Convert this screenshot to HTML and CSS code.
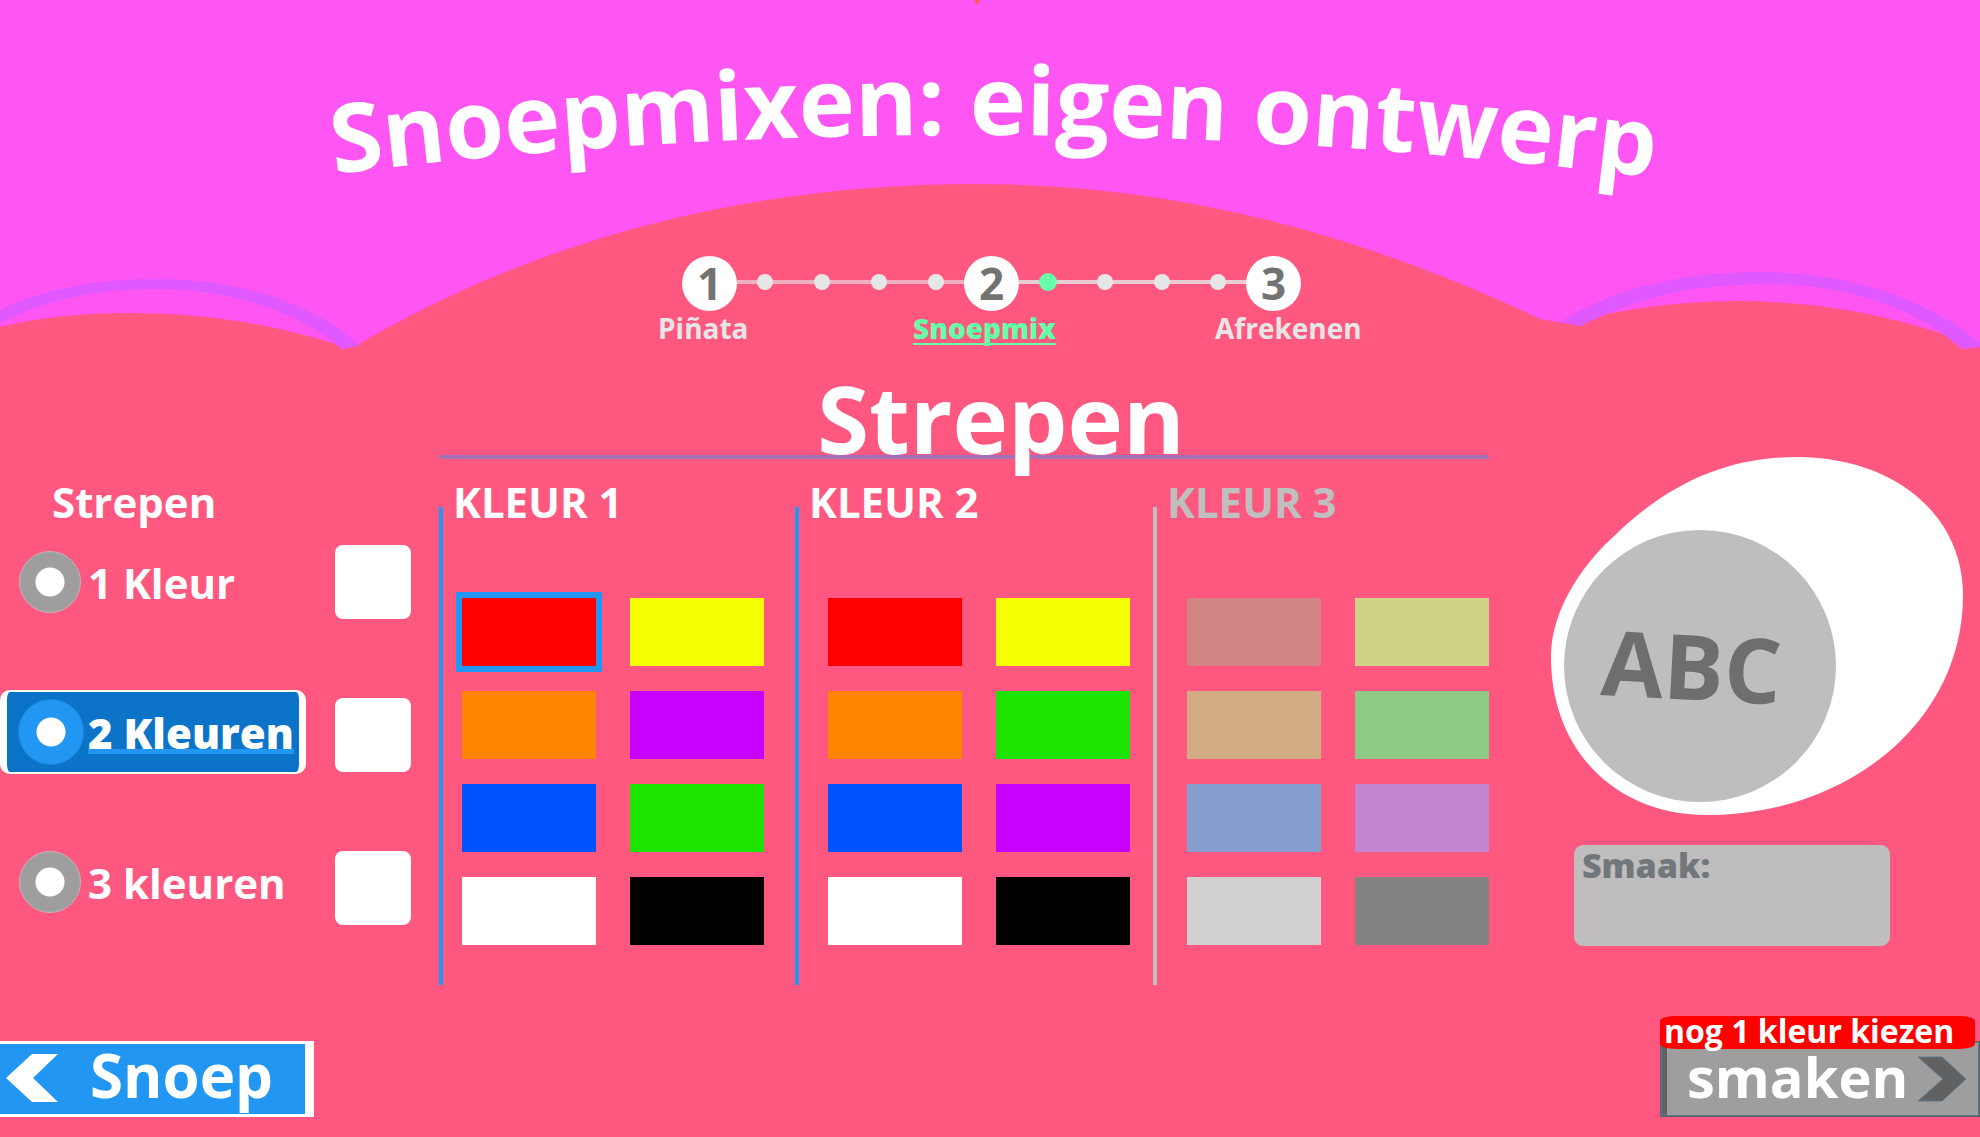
FILE: index.html
```html
<!DOCTYPE html>
<html lang="nl">
<head>
<meta charset="utf-8">
<meta name="viewport" content="width=device-width, initial-scale=1">
<title>Snoepmixen: eigen ontwerp</title>
<link rel="stylesheet" href="styles.css">
</head>
<body>
<svg class="waves" viewBox="0 0 1980 360" preserveAspectRatio="none" aria-hidden="true">
  <path class="waves-sky" d="M0 0H1980V347L1962 349L1943 334C1880 313 1810 301 1737 301C1690 301 1650 306 1606 314L1580 326Q1557 322 1540 319L1536 317C1340 225 1160 184 975 184C750 184 540 238 359 344L343 349L335 344C265 322 200 313 130 313C85 313 40 317 0 327Z"/>
  <path class="waves-arc" d="M0 310C45 288 100 279 155 279C235 279 310 300 360 346L342 349C290 305 220 289 155 289C95 289 45 300 0 323Z"/>
  <path class="waves-arc" d="M1560 322C1620 285 1690 272 1760 272C1850 272 1930 300 1980 343V347L1962 349C1910 303 1840 284 1765 284C1690 284 1640 300 1606 314L1580 326Z"/>
  <path class="waves-notch" d="M974 0H980L978 4H976Z"/>
</svg>

<header>
  <h1 class="title">
    <svg viewBox="0 0 1980 256">
      <path id="title-arc" fill="none" d="M334 174Q990 92 1690 182"/>
      <text class="title-text"><textPath href="#title-arc">Snoepmixen: eigen ontwerp</textPath></text>
    </svg>
  </h1>
  <nav class="stepper" aria-label="Stappen">
    <div class="track">
      <span class="step">1</span>
      <span class="dots"><i class="dot"></i><i class="dot"></i><i class="dot"></i><i class="dot"></i></span>
      <span class="step">2</span>
      <span class="dots dots-current"><i class="dot dot-current"></i><i class="dot"></i><i class="dot"></i><i class="dot"></i></span>
      <span class="step">3</span>
    </div>
    <div class="step-labels">
      <a href="#">Piñata</a>
      <a href="#" class="current" aria-current="step">Snoepmix</a>
      <a href="#">Afrekenen</a>
    </div>
  </nav>
</header>

<main class="designer">
  <h2 class="pattern-title">Strepen</h2>

  <form class="stripes">
    <h3 class="panel-title stripes-title">Strepen</h3>
    <div class="options">
      <label class="option"><input type="radio" name="count"><span>1 Kleur</span></label>
      <label class="option option-selected"><input type="radio" name="count" checked><span>2 Kleuren</span></label>
      <label class="option"><input type="radio" name="count"><span>3 kleuren</span></label>
    </div>
    <div class="samples">
      <span class="sample"></span>
      <span class="sample"></span>
      <span class="sample"></span>
    </div>
  </form>

  <div class="palettes">
    <section class="palette">
      <h3 class="panel-title">KLEUR 1</h3>
      <div class="swatches">
        <button type="button" class="swatch red selected" aria-label="Rood"></button>
        <button type="button" class="swatch yellow" aria-label="Geel"></button>
        <button type="button" class="swatch orange" aria-label="Oranje"></button>
        <button type="button" class="swatch purple" aria-label="Paars"></button>
        <button type="button" class="swatch blue" aria-label="Blauw"></button>
        <button type="button" class="swatch green" aria-label="Groen"></button>
        <button type="button" class="swatch white" aria-label="Wit"></button>
        <button type="button" class="swatch black" aria-label="Zwart"></button>
      </div>
    </section>
    <section class="palette palette-second">
      <h3 class="panel-title">KLEUR 2</h3>
      <div class="swatches">
        <button type="button" class="swatch red" aria-label="Rood"></button>
        <button type="button" class="swatch yellow" aria-label="Geel"></button>
        <button type="button" class="swatch orange" aria-label="Oranje"></button>
        <button type="button" class="swatch green" aria-label="Groen"></button>
        <button type="button" class="swatch blue" aria-label="Blauw"></button>
        <button type="button" class="swatch purple" aria-label="Paars"></button>
        <button type="button" class="swatch white" aria-label="Wit"></button>
        <button type="button" class="swatch black" aria-label="Zwart"></button>
      </div>
    </section>
    <section class="palette palette-disabled">
      <h3 class="panel-title">KLEUR 3</h3>
      <div class="swatches">
        <button type="button" class="swatch red" disabled aria-label="Rood"></button>
        <button type="button" class="swatch yellow" disabled aria-label="Geel"></button>
        <button type="button" class="swatch orange" disabled aria-label="Oranje"></button>
        <button type="button" class="swatch green" disabled aria-label="Groen"></button>
        <button type="button" class="swatch blue" disabled aria-label="Blauw"></button>
        <button type="button" class="swatch purple" disabled aria-label="Paars"></button>
        <button type="button" class="swatch white" disabled aria-label="Wit"></button>
        <button type="button" class="swatch black" disabled aria-label="Zwart"></button>
      </div>
    </section>
  </div>

  <aside class="preview">
    <svg class="candy" viewBox="1551 457 412 358">
      <path fill="#fff" d="M1797 457C1893 457 1963 514 1963 595C1963 724 1845 815 1707 815C1615 815 1551 750 1551 657C1551 603 1592 556 1612 538C1670 481 1730 457 1797 457Z"/>
      <ellipse cx="1700" cy="666" rx="136" ry="136" fill="#bfbdbe"/>
      <text class="candy-text" x="1600" y="695" transform="rotate(3 1600 695)">ABC</text>
    </svg>
    <div class="flavour">Smaak:</div>
  </aside>
</main>

<footer class="actions">
  <button type="button" class="action back">
    <svg width="52" height="48" viewBox="0 0 52 48" aria-hidden="true"><path fill="#fff" d="M0 24L26 0H52L27 24L52 48H26Z"/></svg>
    <span class="action-label">Snoep</span>
  </button>
  <div class="next-wrap">
    <button type="button" class="action next" disabled>
      <span class="action-label">smaken</span>
      <svg width="50" height="46" viewBox="0 0 50 46" aria-hidden="true"><path fill="#616161" stroke="#5a7892" d="M1 1H25L49 23L25 45H1L26 23Z"/></svg>
    </button>
    <span class="notice" role="status">nog 1 kleur kiezen</span>
  </div>
</footer>
</body>
</html>
```
FILE: styles.css
```css
* { box-sizing: border-box; }

body {
  position: relative;
  margin: 0;
  min-height: 100vh;
  overflow-x: hidden;
  background: #ff5880;
  color: #fff;
  font-family: "Open Sans", "Noto Sans", sans-serif;
  font-weight: 700;
}

h1, h2, h3 { margin: 0; font-weight: 700; }
button { margin: 0; font: inherit; color: inherit; }

/* Wavy backdrop behind the header */
.waves {
  position: absolute;
  z-index: -1;
  top: 0;
  left: 0;
  width: 100%;
  height: 360px;
}
.waves-sky { fill: #ff55f2; }
.waves-arc { fill: #e058ff; }
.waves-notch { fill: #ff5a50; }

.title svg { display: block; width: 100%; }
.title-text { fill: #fff; font-size: 95px; }

/* Progress stepper */
.stepper { width: 664px; margin: 0 auto; }
.track { display: flex; margin-left: 24px; width: 619px; }
.step {
  width: 55px;
  height: 55px;
  border-radius: 50%;
  background: #fff;
  color: #737373;
  font-size: 44px;
  line-height: 55px;
  text-align: center;
}
.dots {
  flex: 1;
  display: flex;
  align-items: center;
  justify-content: space-around;
  padding-bottom: 4px;
  background: linear-gradient(#efb0c2, #efb0c2) center / 100% 4px no-repeat content-box;
}
.dots-current { background-image: linear-gradient(#ebcbd4, #ebcbd4); }
.dot { width: 16px; height: 16px; border-radius: 50%; background: #e6e6e6; }
.dot-current { width: 18px; height: 18px; background: #66ffa8; }

.step-labels {
  display: grid;
  grid-template-columns: 255px 302px auto;
  font-size: 28px;
  line-height: 34px;
  white-space: nowrap;
}
.step-labels a { color: #e6e6e6; text-decoration: none; }
.step-labels .current {
  color: #66ffa8;
  font-weight: 800;
  text-decoration: underline 2px;
  text-underline-offset: 4px;
  text-decoration-skip-ink: none;
}

/* Three-part work area */
.designer {
  display: grid;
  grid-template-columns: 439px 1fr 491px;
  grid-template-rows: 77px auto;
  margin-top: 37px;
}
.pattern-title {
  grid-area: 1 / 2;
  padding-left: 74px;
  border-bottom: 4px solid #a472b4;
  font-size: 94px;
  line-height: 73px;
  text-align: center;
}
.panel-title { font-size: 42px; line-height: 58px; }

/* Number of stripe colours */
.stripes {
  grid-area: 2 / 1;
  display: grid;
  grid-template-columns: 306px 76px;
  column-gap: 29px;
  align-content: start;
  padding-top: 14px;
}
.stripes-title { grid-column: 1 / -1; padding-left: 52px; }
.options {
  display: grid;
  align-content: start;
  gap: 66px;
  padding-top: 9px;
}
.option {
  display: flex;
  align-items: center;
  gap: 7px;
  height: 84px;
  padding-left: 19px;
  font-size: 42px;
  white-space: nowrap;
}
.option input {
  appearance: none;
  flex: none;
  width: 62px;
  height: 62px;
  margin: 0;
  border: 1px solid #c4b4b8;
  border-radius: 50%;
  background: radial-gradient(circle, #fff 14px, #9e9e9e 15px);
}
.option-selected {
  padding-left: 11px;
  border: solid #fff;
  border-width: 2px 7px;
  border-radius: 10px;
  background: #0c74c8;
  font-weight: 800;
  text-decoration: underline 5px #2196f3;
  text-underline-offset: 0;
  text-decoration-skip-ink: none;
}
.option-selected input {
  width: 66px;
  height: 66px;
  margin-right: -3px;
  border-color: #2488dc;
  background: radial-gradient(circle, #fff 14px, #2196f3 15px);
}
.samples { display: grid; gap: 79px; align-content: start; padding-top: 14px; }
.sample { height: 74px; border-radius: 8px; background: #fff; }

/* Colour palettes */
.palettes {
  grid-area: 2 / 2;
  display: grid;
  grid-template-columns: 356fr 358fr 336fr;
  padding-top: 14px;
}
.palette {
  padding: 0 0 40px 14px;
  background: linear-gradient(#2196f3, #2196f3) left bottom / 4px calc(100% - 34px) no-repeat;
}
.palette-disabled {
  background-image: linear-gradient(#bfbfbf, #bfbfbf);
  color: #bfbfbf;
}
.swatches {
  display: grid;
  grid-template-columns: repeat(2, minmax(0, 134px));
  gap: 25px 34px;
  padding: 67px 0 0 9px;
}
.palette-second .swatches { padding-left: 19px; }
.palette-disabled .swatches { padding-left: 20px; }
.swatch { height: 68px; padding: 0; border: 0; }
.swatch.selected { box-shadow: 0 0 0 6px #2196f3; }
.red { background: #f00; }
.yellow { background: #f6ff00; }
.orange { background: #ff8400; }
.purple { background: #c800ff; }
.blue { background: #0054ff; }
.green { background: #1ce400; }
.white { background: #fff; }
.black { background: #000; }
.palette-disabled .red { background: #d28482; }
.palette-disabled .yellow { background: #cfd184; }
.palette-disabled .orange { background: #d2ac84; }
.palette-disabled .green { background: #8fc986; }
.palette-disabled .blue { background: #869dd0; }
.palette-disabled .purple { background: #c384d0; }
.palette-disabled .white { background: #d2d0d0; }
.palette-disabled .black { background: #848282; }

/* Candy preview */
.preview { grid-area: 1 / 3 / 3 / 4; padding: 75px 17px 0 62px; }
.candy { display: block; width: 100%; }
.candy-text { fill: #6e6e6e; font-size: 90px; }
.flavour {
  width: 316px;
  height: 101px;
  margin: 30px 0 0 23px;
  padding-left: 8px;
  border-radius: 9px;
  background: #bfbdbd;
  color: #71777a;
  font-size: 34px;
  font-weight: 800;
  line-height: 40px;
}

/* Bottom navigation */
.actions { display: flex; justify-content: space-between; margin-top: 56px; }
.action {
  display: flex;
  align-items: center;
  height: 76px;
  padding: 0;
  line-height: 60px;
}
.action-label { padding-bottom: 6px; }
.back {
  gap: 32px;
  width: 314px;
  padding: 0 0 3px 6px;
  border: solid #fff;
  border-width: 3px 9px 3px 0;
  background: #2196f3;
  font-size: 60px;
}
.next-wrap { position: relative; width: 320px; }
.next {
  gap: 9px;
  width: 100%;
  padding-left: 20px;
  border: solid #616161;
  border-width: 1px 2px 1px 7px;
  outline: 1px solid #5a7892;
  outline-offset: -2px;
  background: #9e9e9e;
  font-size: 56px;
}
.notice {
  position: absolute;
  top: -25px;
  left: 0;
  width: 315px;
  height: 33px;
  padding-left: 4px;
  border-radius: 16px / 5px;
  background: #f00;
  font-size: 32px;
  line-height: 30px;
  white-space: nowrap;
}
```
